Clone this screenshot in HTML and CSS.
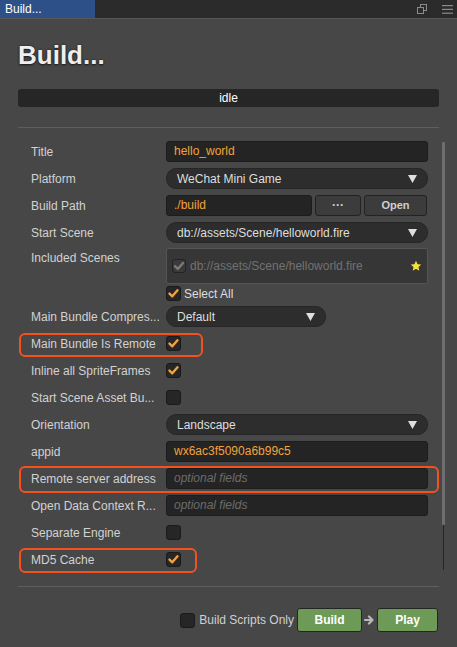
FILE: index.html
```html
<!DOCTYPE html>
<html>
<head>
<meta charset="utf-8">
<link rel="stylesheet" href="styles.css">
</head>
<body>
<div class="tabbar">
  <div class="tab">Build...</div>
  <div class="tab-icons">
    <svg width="10" height="10" viewBox="0 0 10 10"><rect x="3.5" y="0.5" width="6" height="6" fill="none" stroke="#8a8a8a" stroke-width="1"/><rect x="0.5" y="3.5" width="6" height="6" fill="#2b2b2b" stroke="#8a8a8a" stroke-width="1"/></svg>
    <svg width="11" height="9" viewBox="0 0 11 9"><rect x="0" y="0" width="11" height="1.2" fill="#8a8a8a"/><rect x="0" y="3.8" width="11" height="1.2" fill="#8a8a8a"/><rect x="0" y="7.6" width="11" height="1.2" fill="#8a8a8a"/></svg>
  </div>
</div>
<div class="panel">
  <h1 class="title">Build...</h1>
  <div class="status">idle</div>
  <div class="sep sep-top"></div>
  <div class="scroll">
    <div class="form">
      <div class="row"><div class="label">Title</div><div class="input">hello_world</div></div>
      <div class="row"><div class="label">Platform</div><div class="select"><span>WeChat Mini Game</span><svg class="arrow" width="9" height="8" viewBox="0 0 9 8"><path d="M0 0H9L4.5 8Z" fill="#dedede"/></svg></div></div>
      <div class="row"><div class="label">Build Path</div><div class="input path">./build</div><div class="btn dots">···</div><div class="btn open">Open</div></div>
      <div class="row"><div class="label">Start Scene</div><div class="select"><span>db://assets/Scene/helloworld.fire</span><svg class="arrow" width="9" height="8" viewBox="0 0 9 8"><path d="M0 0H9L4.5 8Z" fill="#dedede"/></svg></div></div>
      <div class="row included"><div class="label">Included Scenes</div>
        <div class="scene-box">
          <div class="cb cb-disabled"><svg width="14" height="14" viewBox="0 0 14 14"><path d="M3 7.2L5.8 10L11 4" fill="none" stroke="#7a7a7a" stroke-width="2.4" stroke-linecap="round" stroke-linejoin="round"/></svg></div>
          <span class="scene-name">db://assets/Scene/helloworld.fire</span>
          <svg class="star" width="12" height="12" viewBox="0 0 24 24"><path d="M12 1.5l3.1 6.8 7.4.8-5.5 5 1.5 7.3L12 17.7l-6.5 3.7 1.5-7.3-5.5-5 7.4-.8z" fill="#f6e33c"/></svg>
        </div>
      </div>
      <div class="row select-all"><div class="cb"><svg width="15" height="15" viewBox="0 0 15 15"><path d="M3.5 7.6L6.3 10.3L11.5 4.3" fill="none" stroke="#f3a23c" stroke-width="2.4" stroke-linecap="round" stroke-linejoin="round"/></svg></div><span class="sa-text">Select All</span></div>
      <div class="row"><div class="label">Main Bundle Compres...</div><div class="select small"><span>Default</span><svg class="arrow" width="9" height="8" viewBox="0 0 9 8"><path d="M0 0H9L4.5 8Z" fill="#dedede"/></svg></div></div>
      <div class="row"><span class="hl hl-remote"></span><div class="label">Main Bundle Is Remote</div><div class="cb"><svg width="15" height="15" viewBox="0 0 15 15"><path d="M3.5 7.6L6.3 10.3L11.5 4.3" fill="none" stroke="#f3a23c" stroke-width="2.4" stroke-linecap="round" stroke-linejoin="round"/></svg></div></div>
      <div class="row"><div class="label">Inline all SpriteFrames</div><div class="cb"><svg width="15" height="15" viewBox="0 0 15 15"><path d="M3.5 7.6L6.3 10.3L11.5 4.3" fill="none" stroke="#f3a23c" stroke-width="2.4" stroke-linecap="round" stroke-linejoin="round"/></svg></div></div>
      <div class="row"><div class="label">Start Scene Asset Bu...</div><div class="cb"></div></div>
      <div class="row"><div class="label">Orientation</div><div class="select"><span>Landscape</span><svg class="arrow" width="9" height="8" viewBox="0 0 9 8"><path d="M0 0H9L4.5 8Z" fill="#dedede"/></svg></div></div>
      <div class="row"><div class="label">appid</div><div class="input">wx6ac3f5090a6b99c5</div></div>
      <div class="row"><span class="hl hl-server"></span><div class="label">Remote server address</div><div class="input placeholder">optional fields</div></div>
      <div class="row"><div class="label">Open Data Context R...</div><div class="input placeholder">optional fields</div></div>
      <div class="row"><div class="label">Separate Engine</div><div class="cb"></div></div>
      <div class="row"><span class="hl hl-md5"></span><div class="label">MD5 Cache</div><div class="cb"><svg width="15" height="15" viewBox="0 0 15 15"><path d="M3.5 7.6L6.3 10.3L11.5 4.3" fill="none" stroke="#f3a23c" stroke-width="2.4" stroke-linecap="round" stroke-linejoin="round"/></svg></div></div>
    </div>
    <div class="scrollbar"><div class="thumb"></div><div class="track"></div></div>
  </div>
  <div class="sep"></div>
  <div class="footer">
    <div class="cb"></div>
    <span class="bso">Build Scripts Only</span>
    <div class="gbtn build">Build</div>
    <svg class="next" width="15" height="10" viewBox="0 0 15 10"><path d="M3 5H10M7 1.5L10.5 5L7 8.5" fill="none" stroke="#b8b8b8" stroke-width="2.2" stroke-linecap="round" stroke-linejoin="round"/></svg>
    <div class="gbtn play">Play</div>
  </div>
</div>
</body>
</html>
```
FILE: styles.css
```css
html, body {
  margin: 0;
  padding: 0;
}
body {
  width: 457px;
  height: 647px;
  overflow: hidden;
  background: #474747;
  font-family: "Liberation Sans", Arial, sans-serif;
  font-size: 12px;
  color: #d2d2d2;
}
.tabbar {
  display: flex;
  justify-content: space-between;
  height: 18px;
  background: #2b2b2b;
  border-bottom: 1px solid #575757;
}
.tab {
  width: 95px;
  box-sizing: border-box;
  padding-left: 5px;
  background: #2e5088;
  color: #ffffff;
  font-size: 12px;
  line-height: 18px;
}
.tab-icons {
  display: flex;
  align-items: center;
  gap: 15px;
  padding-right: 4px;
}
.panel {
  padding: 0 18px;
}
.title {
  margin: 21px 0 0;
  font-size: 26px;
  line-height: 30px;
  font-weight: bold;
  color: #eeeeee;
  text-shadow: 0 0 2px #1e1e1e, 0 1px 2px #1e1e1e;
}
.status {
  margin-top: 19px;
  height: 18px;
  line-height: 18px;
  background: #262626;
  border-radius: 3px;
  text-align: center;
  color: #ffffff;
  font-size: 12px;
}
.sep {
  height: 1px;
  background: #5e5e5e;
}
.sep-top {
  margin-top: 20px;
}
.scroll {
  display: flex;
  margin-right: -6px;
}
.form {
  flex: 1;
  display: flex;
  flex-direction: column;
  gap: 6px;
  padding: 13px 14px 16px 13px;
}
.scrollbar {
  width: 3px;
  margin: 14px 0 16px;
  display: flex;
  flex-direction: column;
  align-items: center;
}
.thumb {
  width: 3px;
  height: 383px;
  background: #6e6e6e;
  border-radius: 1px;
}
.track {
  flex: 1;
  width: 1px;
  background: #252525;
}
.row {
  position: relative;
  display: flex;
  align-items: center;
  height: 21px;
}
.label {
  width: 135px;
  flex: none;
  white-space: nowrap;
  overflow: hidden;
  color: #d2d2d2;
}
.input {
  flex: 1;
  height: 21px;
  box-sizing: border-box;
  padding-left: 7px;
  line-height: 19px;
  background: #242424;
  border: 1px solid #1c1c1c;
  border-radius: 3px;
  color: #f3a23c;
  white-space: nowrap;
}
.input.placeholder {
  color: #6c6c6c;
  font-style: italic;
}
.input.path {
  flex: none;
  width: 146px;
}
.btn {
  height: 21px;
  box-sizing: border-box;
  margin-left: 3px;
  background: #3c3c3c;
  border: 1px solid #222222;
  border-radius: 3px;
  color: #cfcfcf;
  font-weight: bold;
  font-size: 11px;
  line-height: 19px;
  text-align: center;
}
.btn.dots {
  width: 46px;
  font-size: 12px;
}
.btn.open {
  width: 63px;
}
.select {
  flex: 1;
  height: 21px;
  box-sizing: border-box;
  display: flex;
  justify-content: space-between;
  align-items: center;
  padding: 0 10px;
  background: #2d2d2d;
  border: 1px solid #262626;
  border-radius: 10px;
  color: #dedede;
}
.select.small {
  flex: none;
  width: 160px;
}
.arrow {
  flex: none;
}
.cb {
  width: 15px;
  height: 15px;
  box-sizing: border-box;
  flex: none;
  display: flex;
  align-items: center;
  justify-content: center;
  background: #262626;
  border: 1px solid #1a1a1a;
  border-radius: 3px;
}
.cb svg {
  flex: none;
}
.included {
  height: 36px;
  align-items: flex-start;
  margin-top: -1px;
}
.included .label {
  line-height: 21px;
}
.scene-box {
  flex: 1;
  height: 36px;
  box-sizing: border-box;
  display: flex;
  align-items: center;
  padding: 0 5px;
  background: #363636;
  border: 1px solid #555555;
  border-radius: 2px;
}
.cb.cb-disabled {
  width: 14px;
  height: 14px;
  background: #3a3a3a;
  border: 1px solid #222222;
}
.scene-name {
  flex: 1;
  margin-left: 4px;
  color: #727272;
  white-space: nowrap;
}
.star {
  flex: none;
}
.select-all {
  height: 15px;
  margin-top: -4px;
  margin-bottom: -1px;
  padding-left: 135px;
}
.sa-text {
  margin-left: 3px;
  color: #dedede;
}
.hl {
  position: absolute;
  box-sizing: border-box;
  border: 2px solid #f4511e;
  border-radius: 6px;
  left: -12px;
}
.hl-remote {
  top: 0;
  width: 184px;
  height: 24px;
}
.hl-server {
  top: -2px;
  width: 420px;
  height: 27px;
}
.hl-md5 {
  top: -1px;
  width: 178px;
  height: 25px;
}
.footer {
  display: flex;
  justify-content: flex-end;
  align-items: center;
  margin-top: 21px;
  padding-right: 1px;
}
.bso {
  margin-left: 4px;
  color: #d0d0d0;
  white-space: nowrap;
}
.gbtn {
  height: 24px;
  box-sizing: border-box;
  background: #6d9a56;
  border: 1px solid #252525;
  border-radius: 3px;
  color: #ffffff;
  font-weight: bold;
  font-size: 12px;
  line-height: 22px;
  text-align: center;
}
.build {
  width: 65px;
  margin-left: 3px;
}
.play {
  width: 61px;
}
.next {
  flex: none;
}
```
